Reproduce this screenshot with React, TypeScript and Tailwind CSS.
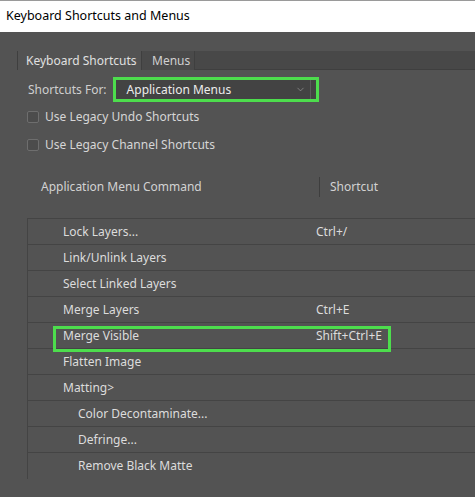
import { ChevronDown } from 'lucide-react';

const rows = [
  { name: 'Lock Layers...', key: 'Ctrl+/' },
  { name: 'Link/Unlink Layers', key: '' },
  { name: 'Select Linked Layers', key: '' },
  { name: 'Merge Layers', key: 'Ctrl+E' },
  { name: 'Merge Visible', key: 'Shift+Ctrl+E', marked: true },
  { name: 'Flatten Image', key: '' },
  { name: 'Matting>', key: '' },
  { name: 'Color Decontaminate...', key: '', sub: true },
  { name: 'Defringe...', key: '', sub: true },
  { name: 'Remove Black Matte', key: '', sub: true },
];

function Checkbox({ label }: { label: string }) {
  return (
    <div className="flex items-center h-[28px] pl-[27px]">
      <div className="w-[12px] h-[12px] rounded-[2px] border border-[#6e6e6e] bg-[#4c4c4c]" />
      <span className="ml-[6px] text-[#d6d6d6]">{label}</span>
    </div>
  );
}

export default function App() {
  return (
    <div
      className="w-[475px] h-[497px] overflow-hidden bg-[#535353] text-[12px] leading-none"
      style={{ fontFamily: '"Noto Sans", "Liberation Sans", sans-serif' }}
    >
      {/* Title bar */}
      <div className="h-[32px] bg-white border-t border-[#9a9a9a] flex items-center pl-[6px] text-[12.5px] text-black">
        Keyboard Shortcuts and Menus
      </div>

      {/* Tabs */}
      <div className="mt-[19px] h-[19px] flex pl-[17px]">
        <div className="w-[124px] border-l border-[#3f3f3f] bg-[#535353] pl-[8px] flex items-center text-[#e0e0e0]">
          Keyboard Shortcuts
        </div>
        <div className="w-[54px] border-l border-r border-[#3f3f3f] bg-[#4a4a4a] flex items-center pl-[10px] text-[#d0d0d0]">
          Menus
        </div>
        <div className="flex-1 bg-[#484848] border-b border-[#3f3f3f]" />
      </div>

      {/* Shortcuts for */}
      <div className="mt-[7px] flex items-center h-[25px] pl-[28px]">
        <span className="text-[#cfcfcf]">Shortcuts For:</span>
        <div className="ml-[6px] w-[206px] h-[25px] border-[3px] border-[#4ddd4d] bg-[#434343] flex items-center">
          <span className="pl-[11px] flex-1 text-[#ececec]">Application Menus</span>
          <ChevronDown className="w-[11px] h-[11px] text-[#a8a8a8] mr-[4px]" strokeWidth={1.25} />
          <div className="w-px h-full bg-[#5c5c5c] mr-[5px]" />
        </div>
      </div>

      <div className="mt-[1px]">
        <Checkbox label="Use Legacy Undo Shortcuts" />
        <Checkbox label="Use Legacy Channel Shortcuts" />
      </div>

      {/* Column headers */}
      <div className="mt-[18px] h-[20px] flex items-center text-[#d2d2d2]">
        <span className="pl-[41px] w-[319px]">Application Menu Command</span>
        <div className="w-px h-full bg-[#3e3e3e]" />
        <span className="pl-[10px]">Shortcut</span>
      </div>

      {/* Table */}
      <div className="mt-[21px] ml-[27px] border-l border-t border-[#444444]">
        {rows.map((r, i) => (
          <div
            key={r.name}
            className={`relative h-[26px] flex items-center text-[#dcdcdc] ${i < rows.length - 1 ? 'border-b border-[#444444]' : ''}`}
          >
            <div className={`${r.sub ? 'pl-[50px]' : 'pl-[35px]'} w-[288px]`}>{r.name}</div>
            <div>{r.key}</div>
            {r.marked && (
              <div className="absolute left-[25px] top-[3px] w-[338px] h-[26px] border-[3px] border-[#4ddd4d]" />
            )}
          </div>
        ))}
      </div>
    </div>
  );
}
